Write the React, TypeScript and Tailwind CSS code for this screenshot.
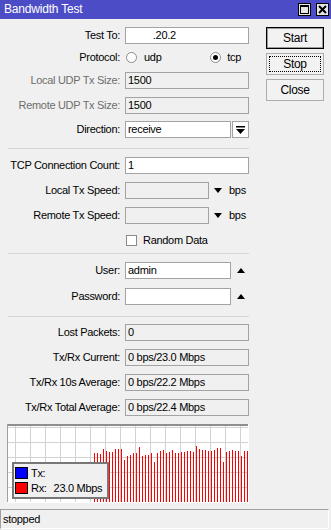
import React from "react";

const barTops = [
  453, 453, 454, 449, 451, 452, 452, 449, 449, 449, 460, 456, 455, 453, 453,
  447, 456, 455, 455, 453, 462, 453, 451, 450, 453, 452, 450, 453, 453, 452,
  452, 451, 451, 452, 446, 449, 450, 450, 451, 451, 450, 448, 448, 462, 452,
  451, 450, 451, 451, 456, 451, 451,
];

const Label = ({ text, disabled }: { text: string; disabled?: boolean }) => (
  <div
    className={`w-[120px] shrink-0 text-right whitespace-nowrap ${
      disabled ? "text-[#6d6d6d]" : "text-black"
    }`}
  >
    {text}
  </div>
);

const Field = ({
  value,
  w = "w-[124px]",
  white,
}: {
  value?: string;
  w?: string;
  white?: boolean;
}) => (
  <div
    className={`${w} h-[17px] ml-[5px] border border-[#a3a3a3] pl-[2px] flex items-center whitespace-pre ${
      white ? "bg-white" : "bg-[#f0f0f0]"
    }`}
  >
    {value}
  </div>
);

const Down = () => (
  <svg width="8" height="5" viewBox="0 0 8 5" className="shrink-0">
    <path d="M0 0h8L4 5z" fill="#000" />
  </svg>
);

const Up = () => (
  <svg width="8" height="5" viewBox="0 0 8 5" className="shrink-0">
    <path d="M0 5h8L4 0z" fill="#000" />
  </svg>
);

const Radio = ({ on }: { on?: boolean }) => (
  <div className="w-[11px] h-[11px] rounded-full bg-white border border-[#8a8a8a] flex items-center justify-center shrink-0">
    {on && <div className="w-[5px] h-[5px] rounded-full bg-black" />}
  </div>
);

const Sep = () => <div className="h-px ml-[8px] w-[241px] bg-[#d6d6d6]" />;

const Graph = () => (
  <div className="relative ml-[7px] mt-[8px] w-[242px] h-[79px]">
    <svg width="242" height="79" viewBox="0 0 242 79" className="block">
      <rect x="0" y="0" width="242" height="79" fill="#fff" />
      {Array.from({ length: 16 }).map((_, i) => (
        <rect key={"v" + i} x={8 + i * 15} y="0" width="1" height="79" fill="#d2d2d2" />
      ))}
      {[3, 18, 33, 48, 63].map((y) => (
        <rect key={"h" + y} x="0" y={y} width="242" height="1" fill="#d2d2d2" />
      ))}
      {barTops.map((t, i) => (
        <rect key={"b" + i} x={87 + i * 3} y={t - 424} width="1" height={78 - (t - 424)} fill="#ff0000" />
      ))}
      <rect x="0" y="0" width="242" height="2" fill="#8e8e8e" />
      <rect x="0" y="0" width="1" height="79" fill="#a0a0a0" />
      <rect x="241" y="0" width="1" height="79" fill="#ffffff" />
      <rect x="0" y="78" width="242" height="1" fill="#ffffff" />
    </svg>
    {/* legend overlay */}
    <div className="absolute left-[5px] top-[38px] w-[97px] h-[37px] bg-[#f0f0f0] border-2 border-[#777] flex flex-col justify-center gap-[3px] pl-[1px]">
      <div className="flex items-center h-[12px]">
        <div className="w-[13px] h-[12px] bg-[#0000ff] border border-black" />
        <span className="ml-[3px]">Tx:</span>
      </div>
      <div className="flex items-center h-[12px]">
        <div className="w-[13px] h-[12px] bg-[#ff0000] border border-black" />
        <span className="ml-[3px]">Rx:</span>
        <span className="ml-[7px]">23.0 Mbps</span>
      </div>
    </div>
  </div>
);

export default function App() {
  return (
    <div className="w-[331px] h-[530px] bg-[#f0f0f0] flex flex-col overflow-hidden font-['Liberation_Sans',Arial,sans-serif] text-[11px] tracking-[-0.3px] text-black leading-[13px]">
      {/* title bar */}
      <div className="h-[19px] shrink-0 bg-[#4c4cc6] flex items-center pl-[4px] pr-[2px]">
        <span className="text-white text-[12px] tracking-[-0.2px]">Bandwidth Test</span>
        <div className="ml-auto flex gap-[5px]">
          <svg width="13" height="13" viewBox="0 0 13 13">
            <rect x="0.5" y="0.5" width="12" height="12" fill="#e6e6e6" stroke="#000" />
            <rect x="2.5" y="2.5" width="8" height="8" fill="none" stroke="#000" />
            <rect x="2" y="2" width="9" height="2" fill="#000" />
          </svg>
          <svg width="13" height="13" viewBox="0 0 13 13">
            <rect x="0.5" y="0.5" width="12" height="12" fill="#e6e6e6" stroke="#000" />
            <path d="M3 3l7 7M10 3l-7 7" stroke="#000" strokeWidth="2" />
          </svg>
        </div>
      </div>

      <div className="flex">
        {/* form column */}
        <div className="w-[250px] flex flex-col">
          <div className="flex items-center h-[17px] mt-[8px]">
            <Label text="Test To:" />
            <Field value="         .20.2" white />
          </div>
          <div className="flex items-center h-[17px] mt-[5px]">
            <Label text="Protocol:" />
            <div className="ml-[6px] flex items-center w-[123px]">
              <Radio />
              <span className="ml-[7px]">udp</span>
              <div className="ml-auto flex items-center">
                <Radio on />
                <span className="ml-[6px] mr-[8px]">tcp</span>
              </div>
            </div>
          </div>
          <div className="flex items-center h-[17px] mt-[6px]">
            <Label text="Local UDP Tx Size:" disabled />
            <Field value="1500" />
          </div>
          <div className="flex items-center h-[17px] mt-[8px]">
            <Label text="Remote UDP Tx Size:" disabled />
            <Field value="1500" />
          </div>
          <div className="flex items-center h-[17px] mt-[7px]">
            <Label text="Direction:" />
            <Field value="receive" w="w-[106px]" white />
            <div className="w-[17px] h-[17px] ml-px bg-white border border-[#a3a3a3] flex items-center justify-center">
              <svg width="9" height="8" viewBox="0 0 9 8">
                <rect x="0" y="0" width="9" height="1.5" fill="#000" />
                <path d="M0 3h9L4.5 8z" fill="#000" />
              </svg>
            </div>
          </div>

          <div className="mt-[10px]">
            <Sep />
          </div>

          <div className="flex items-center h-[17px] mt-[8px]">
            <Label text="TCP Connection Count:" />
            <Field value="1" white />
          </div>
          <div className="flex items-center h-[17px] mt-[8px]">
            <Label text="Local Tx Speed:" />
            <Field w="w-[84px]" />
            <div className="ml-[5px]"><Down /></div>
            <span className="ml-[7px]">bps</span>
          </div>
          <div className="flex items-center h-[17px] mt-[8px]">
            <Label text="Remote Tx Speed:" />
            <Field w="w-[84px]" />
            <div className="ml-[5px]"><Down /></div>
            <span className="ml-[7px]">bps</span>
          </div>
          <div className="flex items-center h-[17px] mt-[8px]">
            <div className="w-[126px] shrink-0" />
            <div className="w-[11px] h-[11px] bg-white border border-[#8a8a8a]" />
            <span className="ml-[6px]">Random Data</span>
          </div>

          <div className="mt-[4px]">
            <Sep />
          </div>

          <div className="flex items-center h-[17px] mt-[8px]">
            <Label text="User:" />
            <Field value="admin" w="w-[106px]" white />
            <div className="ml-[6px]"><Up /></div>
          </div>
          <div className="flex items-center h-[17px] mt-[9px]">
            <Label text="Password:" />
            <Field w="w-[106px]" white />
            <div className="ml-[6px]"><Up /></div>
          </div>

          <div className="mt-[11px]">
            <Sep />
          </div>

          <div className="flex items-center h-[17px] mt-[7px]">
            <Label text="Lost Packets:" />
            <Field value="0" />
          </div>
          <div className="flex items-center h-[17px] mt-[8px]">
            <Label text="Tx/Rx Current:" />
            <Field value="0 bps/23.0 Mbps" />
          </div>
          <div className="flex items-center h-[17px] mt-[8px]">
            <Label text="Tx/Rx 10s Average:" />
            <Field value="0 bps/22.2 Mbps" />
          </div>
          <div className="flex items-center h-[17px] mt-[8px]">
            <Label text="Tx/Rx Total Average:" />
            <Field value="0 bps/22.4 Mbps" />
          </div>

          <Graph />
        </div>

        {/* button column */}
        <div className="ml-[16px] pt-[8px] flex flex-col gap-[4px]">
          <button className="w-[58px] h-[22px] bg-[#f2f2f2] border border-black shadow-[inset_0_0_0_1px_#9a9a9a] text-[12px]">
            Start
          </button>
          <button className="w-[58px] h-[22px] bg-[#f2f2f2] border border-[#adadad] outline-1 outline-dotted outline-black outline-offset-[-4px] text-[12px]">
            Stop
          </button>
          <button className="w-[58px] h-[22px] bg-[#f2f2f2] border border-[#adadad] text-[12px]">
            Close
          </button>
        </div>
      </div>

      {/* status bar */}
      <div className="mt-[6px] w-[329px] h-[20px] border-t border-l border-[#a0a0a0] border-r border-b border-r-white border-b-white flex items-center pl-[2px]">
        stopped
      </div>
    </div>
  );
}
